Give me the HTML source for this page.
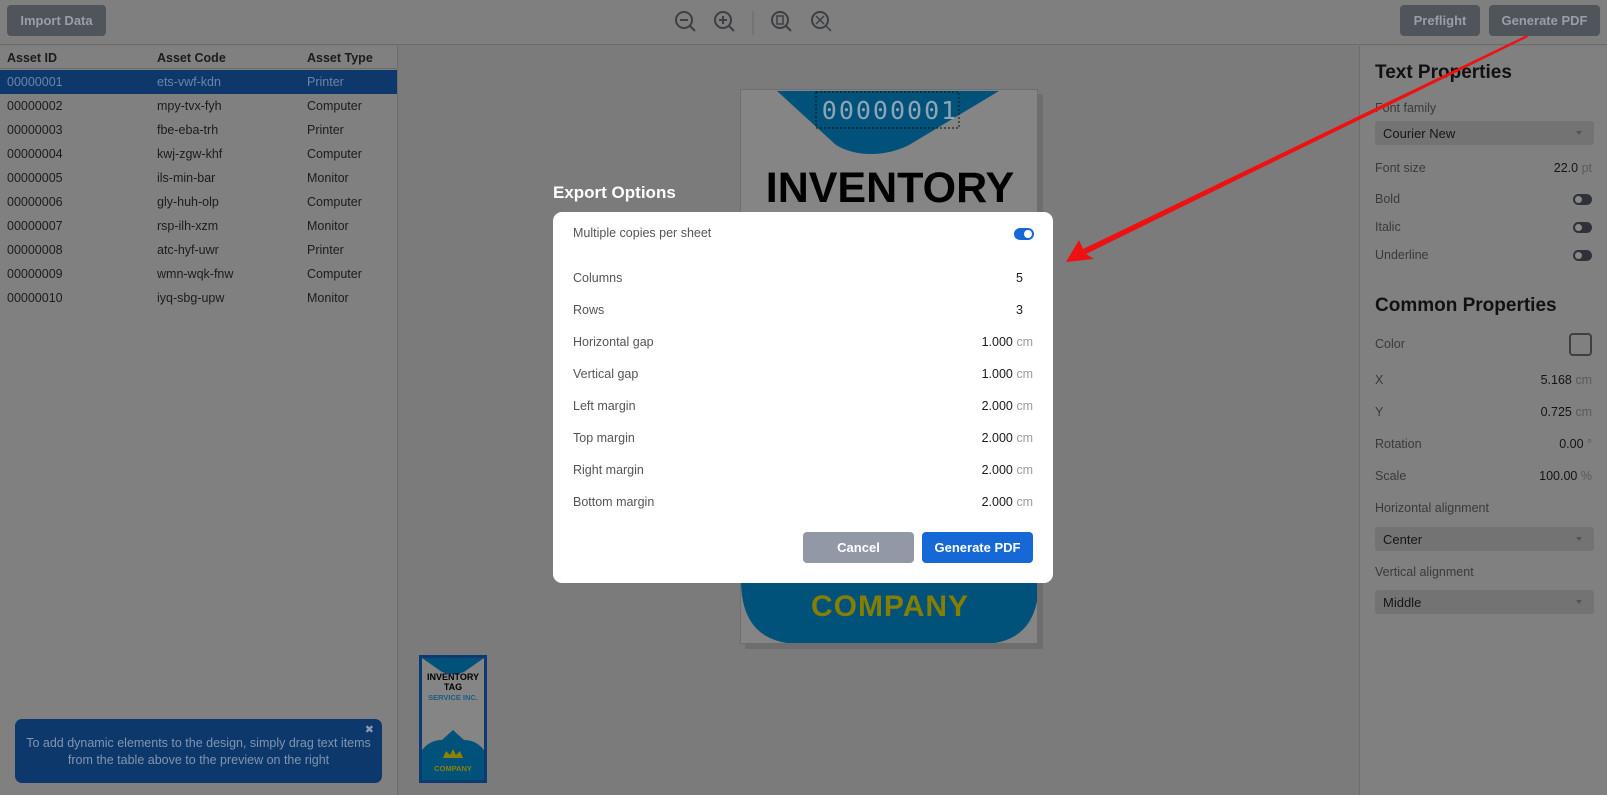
<!DOCTYPE html>
<html><head><meta charset="utf-8"><style>
*{margin:0;padding:0;box-sizing:border-box}
body{width:1607px;height:795px;overflow:hidden;background:#7b7b7b;font-family:"Liberation Sans",Arial,sans-serif;position:relative}
.abs{position:absolute}
.top{left:0;top:0;width:1607px;height:45px;background:#7f7f7f;border-bottom:1px solid #6c6c6c}
.btn{position:absolute;background:#50545b;border-radius:4px;color:#9a9ea5;font-weight:bold;font-size:13px;display:flex;align-items:center;justify-content:center}
.left{left:0;top:46px;width:398px;height:749px;background:#808080;border-right:1px solid #6c6c6c}
.row{position:absolute;left:0;width:397px;height:24px;font-size:12.5px;color:#1c1c1c}
.row span{position:absolute;top:5px}
.right{left:1359px;top:46px;width:248px;height:749px;background:#808080;border-left:1px solid #6c6c6c}
.lbl{position:absolute;left:1375px;font-size:12.5px;color:#3a3a3a}
.val{position:absolute;right:15px;font-size:12.5px;color:#141414}
.val i{font-style:normal;color:#5a5a5a}
.sel{position:absolute;left:1375px;width:219px;height:24px;background:#737373;border-radius:3px;font-size:13px;color:#161616;padding:5px 8px}
.sel:after{content:"";position:absolute;right:12px;top:10px;border:3px solid transparent;border-top:4px solid #555}
.tg{position:absolute;left:1573px;width:19px;height:11px;border-radius:6px;background:#2e3137}
.tg:after{content:"";position:absolute;left:2px;top:2px;width:7px;height:7px;border-radius:50%;background:#888}
.modal{left:553px;top:212px;width:500px;height:371px;background:#fff;border-radius:9px}
.ml{position:absolute;left:20px;font-size:12.5px;color:#555}
.mv{position:absolute;right:20px;font-size:12.5px;color:#1a1a1a}
.mv i{font-style:normal;color:#999}
</style></head><body>
<div class="abs top"></div>
<div class="btn" style="left:7px;top:5px;width:99px;height:31px">Import Data</div>
<div class="btn" style="left:1400px;top:5px;width:80px;height:31px">Preflight</div>
<div class="btn" style="left:1489px;top:5px;width:111px;height:31px">Generate PDF</div>
<svg class="abs" style="left:670px;top:8px" width="170" height="28" fill="none" stroke="#3c3f44" stroke-width="2">
<circle cx="14" cy="12" r="8"/><path d="M20 18l5 5M10 12h8"/>
<circle cx="53" cy="12" r="8"/><path d="M59 18l5 5M49 12h8M53 8v8"/>
<path d="M83 3v24" stroke="#6a6a6a" stroke-width="1"/>
<circle cx="110" cy="12" r="8"/><path d="M116 18l5 5"/><rect x="107" y="8" width="6" height="8" stroke-width="1.5"/>
<circle cx="150" cy="12" r="8"/><path d="M156 18l5 5M146 8l8 8M154 8l-8 8" stroke-width="1.5"/>
</svg>
<div class="abs left"></div>
<div class="row" style="top:46px;font-weight:bold;height:23px;border-bottom:1px solid #6c6c6c"><span style="left:7px">Asset ID</span><span style="left:157px">Asset Code</span><span style="left:307px">Asset Type</span></div>
<div class="row" style="top:70px;background:#0e386b;color:#6c84a6"><span style="left:7px">00000001</span><span style="left:157px">ets-vwf-kdn</span><span style="left:307px">Printer</span></div>
<div class="row" style="top:94px"><span style="left:7px">00000002</span><span style="left:157px">mpy-tvx-fyh</span><span style="left:307px">Computer</span></div>
<div class="row" style="top:118px"><span style="left:7px">00000003</span><span style="left:157px">fbe-eba-trh</span><span style="left:307px">Printer</span></div>
<div class="row" style="top:142px"><span style="left:7px">00000004</span><span style="left:157px">kwj-zgw-khf</span><span style="left:307px">Computer</span></div>
<div class="row" style="top:166px"><span style="left:7px">00000005</span><span style="left:157px">ils-min-bar</span><span style="left:307px">Monitor</span></div>
<div class="row" style="top:190px"><span style="left:7px">00000006</span><span style="left:157px">gly-huh-olp</span><span style="left:307px">Computer</span></div>
<div class="row" style="top:214px"><span style="left:7px">00000007</span><span style="left:157px">rsp-ilh-xzm</span><span style="left:307px">Monitor</span></div>
<div class="row" style="top:238px"><span style="left:7px">00000008</span><span style="left:157px">atc-hyf-uwr</span><span style="left:307px">Printer</span></div>
<div class="row" style="top:262px"><span style="left:7px">00000009</span><span style="left:157px">wmn-wqk-fnw</span><span style="left:307px">Computer</span></div>
<div class="row" style="top:286px"><span style="left:7px">00000010</span><span style="left:157px">iyq-sbg-upw</span><span style="left:307px">Monitor</span></div>
<div class="abs" style="left:15px;top:719px;width:367px;height:64px;background:#0d386b;border-radius:7px;color:#8294b0;font-size:12.5px;text-align:center;line-height:17px;padding-top:16px">To add dynamic elements to the design, simply drag text items<br>from the table above to the preview on the right<span style="position:absolute;right:8px;top:3px;font-size:11px;color:#8a9ab2">✖</span></div>

<div class="abs right"></div>
<div class="abs" style="left:1375px;top:62px;font-size:19px;font-weight:bold;color:#111">Text Properties</div>
<div class="lbl" style="top:101px">Font family</div>
<div class="sel" style="top:121px">Courier New</div>
<div class="lbl" style="top:161px">Font size</div><div class="val" style="top:161px">22.0 <i>pt</i></div>
<div class="lbl" style="top:192px">Bold</div><div class="tg" style="top:194px"></div>
<div class="lbl" style="top:220px">Italic</div><div class="tg" style="top:222px"></div>
<div class="lbl" style="top:248px">Underline</div><div class="tg" style="top:250px"></div>
<div class="abs" style="left:1375px;top:295px;font-size:19px;font-weight:bold;color:#111">Common Properties</div>
<div class="lbl" style="top:337px">Color</div>
<div class="abs" style="left:1569px;top:333px;width:23px;height:23px;border:2px solid #3c3f44;border-radius:4px"></div>
<div class="lbl" style="top:373px">X</div><div class="val" style="top:373px">5.168 <i>cm</i></div>
<div class="lbl" style="top:405px">Y</div><div class="val" style="top:405px">0.725 <i>cm</i></div>
<div class="lbl" style="top:437px">Rotation</div><div class="val" style="top:437px">0.00 <i>°</i></div>
<div class="lbl" style="top:469px">Scale</div><div class="val" style="top:469px">100.00 <i>%</i></div>
<div class="lbl" style="top:501px">Horizontal alignment</div>
<div class="sel" style="top:527px">Center</div>
<div class="lbl" style="top:565px">Vertical alignment</div>
<div class="sel" style="top:590px">Middle</div>

<div class="abs" style="left:745px;top:94px;width:298px;height:555px;background:#6e6e6e"></div>
<div class="abs" style="left:740px;top:89px;width:298px;height:555px;background:#858585;border:1px solid #6e6e6e;overflow:hidden">
<svg width="298" height="555" style="position:absolute;left:0;top:0">
<path d="M36 1H258L168 55Q150 64 130 64Q110 64 95 55Z" fill="#00527a"/>
<rect x="75" y="2" width="143" height="36" fill="none" stroke="#111" stroke-dasharray="2 2"/>
<path d="M0 490H298Q298 554 240 554H60Q0 554 0 490Z" fill="#00527a"/>
</svg>
<div class="abs" style="left:0;width:298px;top:6px;text-align:center;font-family:'DejaVu Sans Mono',monospace;font-size:25px;color:#8fa5b5;letter-spacing:2px">00000001</div>
<div class="abs" style="left:0;width:298px;top:74px;text-align:center;font-weight:bold;font-size:43px;color:#000">INVENTORY</div>
<div class="abs" style="left:0;width:298px;top:500px;text-align:center;font-weight:bold;font-size:30px;color:#857e00;letter-spacing:1px">COMPANY</div>
</div>

<div class="abs" style="left:419px;top:655px;width:68px;height:128px;background:#858585;border:3px solid #0d3a70;overflow:hidden">
<svg width="62" height="122" style="position:absolute;left:0;top:0"><path d="M0 0H62L42 14Q31 18 20 14Z" fill="#00527a"/><path d="M0 122V92Q8 82 20 82L31 72L42 82Q54 82 62 92V122Z" fill="#00527a"/><path d="M21 100l3 -7 4 4 3-6 3 6 4-4 3 7Z" fill="#8a8200"/></svg>
<div class="abs" style="left:0;width:62px;top:14px;text-align:center;font-weight:bold;font-size:9px;line-height:10px;color:#000">INVENTORY<br>TAG</div>
<div class="abs" style="left:0;width:62px;top:35px;text-align:center;font-weight:bold;font-size:7.5px;color:#1c5d85">SERVICE INC.</div>
<div class="abs" style="left:0;width:62px;top:106px;text-align:center;font-weight:bold;font-size:7.5px;color:#8a8200">COMPANY</div>
</div>

<div class="abs" style="left:553px;top:183px;font-family:'Liberation Sans',sans-serif;font-weight:bold;font-size:17px;color:#fff">Export Options</div>
<div class="abs modal">
<div class="ml" style="top:14px">Multiple copies per sheet</div>
<div class="abs" style="left:461px;top:16px;width:20px;height:12px;border-radius:6px;background:#1668d6"><div style="position:absolute;right:2px;top:2px;width:8px;height:8px;border-radius:50%;background:#fff"></div></div>
<div class="ml" style="top:59px">Columns</div><div class="mv" style="top:59px;right:30px">5</div>
<div class="ml" style="top:91px">Rows</div><div class="mv" style="top:91px;right:30px">3</div>
<div class="ml" style="top:123px">Horizontal gap</div><div class="mv" style="top:123px">1.000 <i>cm</i></div>
<div class="ml" style="top:155px">Vertical gap</div><div class="mv" style="top:155px">1.000 <i>cm</i></div>
<div class="ml" style="top:187px">Left margin</div><div class="mv" style="top:187px">2.000 <i>cm</i></div>
<div class="ml" style="top:219px">Top margin</div><div class="mv" style="top:219px">2.000 <i>cm</i></div>
<div class="ml" style="top:251px">Right margin</div><div class="mv" style="top:251px">2.000 <i>cm</i></div>
<div class="ml" style="top:283px">Bottom margin</div><div class="mv" style="top:283px">2.000 <i>cm</i></div>
<div class="btn" style="left:250px;top:320px;width:111px;height:31px;background:#9298a6;color:#fff">Cancel</div>
<div class="btn" style="left:369px;top:320px;width:111px;height:31px;background:#1668d6;color:#fff">Generate PDF</div>
</div>

<svg class="abs" style="left:0;top:0" width="1607" height="795"><path d="M1527 35L1528 37L1086 254L1083 249Z" fill="#ee1111"/><path d="M1066 262L1079 240L1083 249L1086 254L1094 259Z" fill="#ee1111"/></svg>
</body></html>
